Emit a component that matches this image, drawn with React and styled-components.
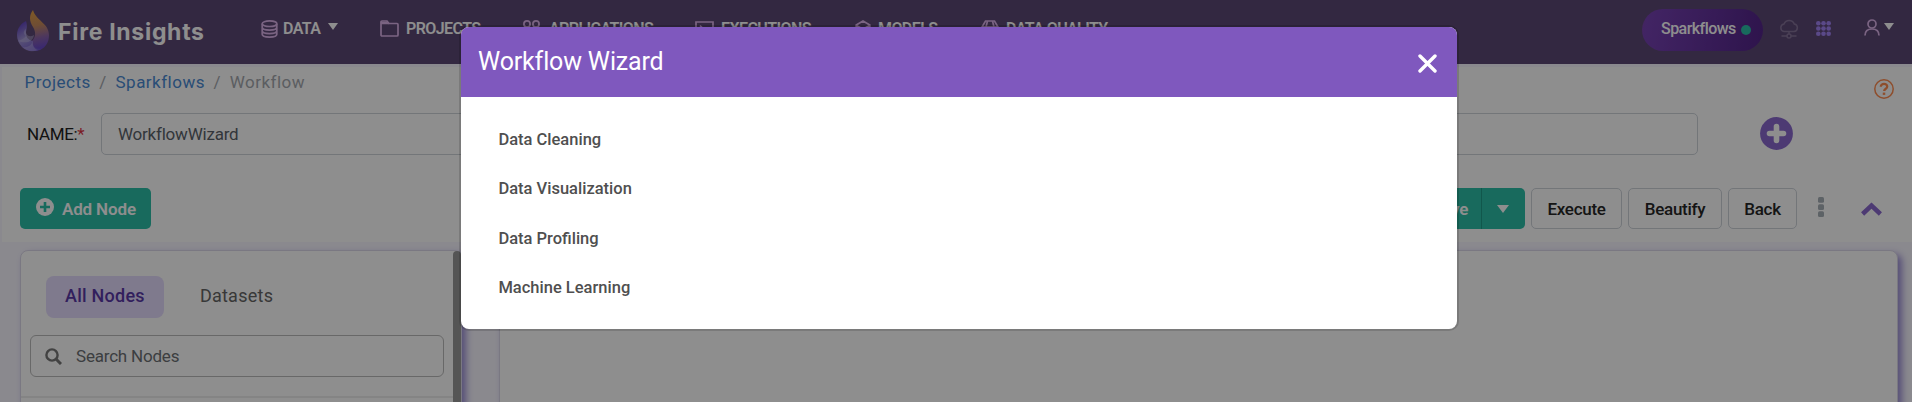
import React from "react";
import styled, { createGlobalStyle } from "styled-components";

const Global = createGlobalStyle`
  * { box-sizing: border-box; }
  html, body { margin: 0; padding: 0; overflow: hidden; }
  body { font-family: Roboto, "Liberation Sans", sans-serif; background: #f8f6ff; }
  button, input { font: inherit; }
`;

const Page = styled.div`
  position: relative;
  height: 402px;
  overflow: hidden;
  display: flex;
  flex-direction: column;
`;

const Header = styled.header`
  display: flex;
  height: 64px;
  flex: none;
  background: #5d4876;
  color: #fff;
`;

const Brand = styled.div`
  display: flex;
  width: 261px;
  padding: 9px 0 0 16px;
  gap: 8px;
`;

const BrandName = styled.span`
  font-family: Inter, sans-serif;
  font-weight: 700;
  font-size: 23px;
  line-height: 46px;
  letter-spacing: 0.7px;
  white-space: nowrap;
`;

const Nav = styled.nav`
  display: grid;
  grid-template-columns: 119px 143px 172px 160px 126px 140px;
  flex: 1;
`;

const NavItem = styled.a`
  display: flex;
  height: 57px;
  align-items: center;
  white-space: nowrap;
  font-size: 16px;
  font-weight: 600;
  letter-spacing: -0.58px;
  svg { flex: none; }
`;

const NavIcon = styled.span`
  display: flex;
  flex: none;
  width: ${(p) => p.$w}px;
  color: #dcb4ea;
`;

const Caret = styled.i`
  width: 0;
  height: 0;
  border: ${(p) => p.$s || 5}px solid transparent;
  border-top: ${(p) => p.$h || 7}px solid #fff;
  border-bottom: 0;
  margin: ${(p) => p.$m || "0"};
`;

const Tools = styled.div`
  display: flex;
  width: 270px;
  padding-top: 9px;
`;

const Pill = styled.div`
  display: flex;
  width: 121px;
  height: 42px;
  border-radius: 21px;
  padding: 0 0 4px 19px;
  align-items: center;
  gap: 5px;
  font-size: 16px;
  font-weight: 500;
  letter-spacing: -0.55px;
  background: linear-gradient(100deg, #79439f 0%, #7742b4 5%, #532489 100%);
`;

const Dot = styled.i`
  width: 10px;
  height: 10px;
  margin-top: 3px;
  border-radius: 50%;
  background: #2bbea7;
`;

const ToolIcon = styled.span`
  display: flex;
  height: 20px;
  margin: ${(p) => p.$m};
  color: ${(p) => p.$c};
`;

const Panel = styled.section`
  height: 178px;
  flex: none;
  margin-left: 2px;
  background: #fff;
  border-top: 3px solid #f8f6ff;
`;

const CrumbRow = styled.div`
  display: flex;
  justify-content: space-between;
  height: 46px;
  padding: 0 18px 0 22.5px;
`;

const Crumbs = styled.div`
  display: flex;
  gap: 8.7px;
  font-size: 17px;
  line-height: 31px;
  letter-spacing: 0.48px;
  color: #a4a8ae;
`;

const CrumbLink = styled.a`
  color: #4a8ad4;
`;

const HelpIcon = styled.span`
  padding-top: 12px;
  height: 32px;
`;

const NameRow = styled.div`
  display: flex;
  height: 42px;
  padding-left: 25px;
  align-items: center;
`;

const NameLabel = styled.label`
  width: 74px;
  font-size: 17px;
  color: #222;
  font-weight: 450;
  letter-spacing: -0.35px;
  span { color: #dc3545; }
`;

const NameField = styled.div`
  width: 1597px;
  height: 42px;
  border: 1px solid #ced4da;
  border-radius: 5px;
  padding-left: 16px;
  font-size: 17px;
  line-height: 40px;
  letter-spacing: -0.22px;
  color: #5a626a;
`;

const AddRound = styled.span`
  display: flex;
  margin: -1px 0 0 62px;
`;

const ActionRow = styled.div`
  display: flex;
  align-items: center;
  height: 41px;
  margin-top: 33px;
  padding-left: 18px;
`;

const TealButton = styled.button`
  display: flex;
  align-items: center;
  height: 41px;
  border: 0;
  padding: 0 0 0 ${(p) => p.$pad}px;
  width: ${(p) => p.$w}px;
  border-radius: ${(p) => p.$r || "5px"};
  background: #2bbea7;
  color: #fff;
  font-weight: 600;
  font-size: 17px;
  letter-spacing: -0.15px;
  gap: 8px;
  white-space: nowrap;
`;

const PlusBadge = styled.svg`
  margin-bottom: 3px;
`;

const Spacer = styled.div`
  width: 1264px;
  flex: none;
`;

const SaveCaret = styled(TealButton)`
  border-left: 1px solid #1f9d89;
`;

const PlainButton = styled.button`
  width: ${(p) => p.$w}px;
  height: 41px;
  margin-left: 6px;
  padding: 0;
  border: 1px solid #ced4da;
  border-radius: 5px;
  background: #fff;
  color: #262626;
  font-size: 17px;
  font-weight: 480;
  letter-spacing: -0.28px;
`;

const Workspace = styled.main`
  display: flex;
  flex: 1;
  padding: 8px 14px 0 20px;
  gap: 37px;
`;

const Card = styled.section`
  display: flex;
  height: 200px;
  width: ${(p) => p.$w}px;
  flex: none;
  border: 1px solid #dcd8ea;
  border-radius: 8px;
  background: #fff;
  box-shadow: 4px 4px 7px #9a8cd6;
`;

const NodePane = styled.div`
  flex: 1;
`;

const ScrollThumb = styled.div`
  width: 8px;
  border-radius: 5px 5px 0 0;
  background: #999;
`;

const Tabs = styled.div`
  display: flex;
  padding: 25px 0 0 25px;
`;

const Tab = styled.div`
  height: 42px;
  padding: 0 19px;
  margin-right: 17px;
  border-radius: 8px;
  font-size: 18px;
  line-height: 40px;
  letter-spacing: 0.25px;
  font-weight: ${(p) => (p.$active ? 500 : 400)};
  color: ${(p) => (p.$active ? "#5a39a8" : "#666")};
  background: ${(p) => (p.$active ? "#e4dbfd" : "transparent")};
`;

const Search = styled.div`
  display: flex;
  align-items: center;
  gap: 14px;
  width: 414px;
  height: 42px;
  margin: 17px 0 0 9px;
  padding-left: 14px;
  border: 1px solid #bbb;
  border-radius: 6px;
  font-size: 17px;
  letter-spacing: -0.2px;
  color: #6c7074;
`;

const Divider = styled.div`
  height: 2px;
  margin-top: 19px;
  background: #eee;
`;

const Backdrop = styled.div`
  position: absolute;
  inset: 0;
  display: flex;
  align-items: flex-start;
  padding: 27px 0 0 461px;
  background: rgba(0, 0, 0, 0.443);
`;

const Modal = styled.div`
  width: 996px;
  height: 302px;
  border-radius: 8px;
  background: #fff;
  box-shadow: 0 0 0 2px rgba(0, 0, 0, 0.14);
`;

const ModalHead = styled.div`
  display: flex;
  justify-content: space-between;
  height: 70px;
  padding: 0 20px 0 17px;
  border-radius: 8px 8px 0 0;
  background: #7f58be;
  color: #fff;
`;

const ModalTitle = styled.h2`
  margin: 0;
  font-size: 25px;
  font-weight: 400;
  line-height: 70px;
  letter-spacing: -0.15px;
`;

const CloseIcon = styled.svg`
  margin-top: 27px;
`;

const Choices = styled.ul`
  list-style: none;
  margin: 0;
  padding: 18px 0 0 37.4px;
  li {
    height: 49.33px;
    line-height: 49.33px;
    font-size: 16.5px;
    font-weight: 500;
    color: #4f4f4f;
  }
`;

const Flame = () => (
  <svg width="34" height="43" viewBox="0 0 34 43">
    <defs>
      <linearGradient id="flame" x1="0" y1="0" x2="0.15" y2="1">
        <stop offset="0" stopColor="#e9a53e" />
        <stop offset="0.45" stopColor="#c78b5e" />
        <stop offset="0.75" stopColor="#8b64a8" />
        <stop offset="1" stopColor="#6a4ac8" />
      </linearGradient>
      <linearGradient id="drop" x1="0.2" y1="0" x2="0.7" y2="1">
        <stop offset="0" stopColor="#5a3bbd" />
        <stop offset="0.5" stopColor="#a093d4" />
        <stop offset="1" stopColor="#7059cb" />
      </linearGradient>
    </defs>
    <path d="M17 1C13 6 13 12 17 18c3 5 3 10-1 14-4 5-9 7-11 5 5 5 13 6 19 4 6-3 9-8 9-15C33 14 20 12 17 1Z" fill="url(#flame)" />
    <path d="M10 12C4 15 1 20 1 26c0 9 7 16 16 16 3 0 6-1 8-2-6 0-9-3-8-8-5-1-7-4-7-8 0-3 2-6 0-12Z" fill="url(#drop)" />
    <path d="M10 20c-1 6 3 9 8 6-1 7-8 9-16 6 3-1 6-2 8-5-3-2-3-5 0-7Z" fill="#c3bce2" opacity="0.45" />
    <path d="M17 32c-2 5-6 7-11 6 5 5 11 5 16 3-4-1-6-5-5-9Z" fill="#b5a8e2" opacity="0.5" />
  </svg>
);

const line = { fill: "none", stroke: "currentColor", strokeWidth: 1.7 };

const DatabaseIcon = () => (
  <svg width="17" height="18" viewBox="0 0 17 18" {...line}>
    <ellipse cx="8.5" cy="3.7" rx="7.3" ry="2.8" />
    <path d="M1.2 3.7v10.6c0 1.6 3.2 2.8 7.3 2.8s7.3-1.2 7.3-2.8V3.7M1.2 7.3c0 1.6 3.2 2.8 7.3 2.8s7.3-1.2 7.3-2.8M1.2 10.8c0 1.6 3.2 2.8 7.3 2.8s7.3-1.2 7.3-2.8" />
  </svg>
);
const FolderIcon = () => (
  <svg width="19" height="17" viewBox="0 0 19 17" {...line}>
    <path d="M1 15V2q0-1 1-1h5l2 2.500h8q1 0 1 1V15q0 1-1 1H2q-1 0-1-1Z" />
    <path d="M1 2h6l2 2H1Z" fill="currentColor" strokeWidth="0.5" />
  </svg>
);
const AppsIcon = () => (
  <svg width="17" height="17" viewBox="0 0 17 17" {...line}>
    <circle cx="4" cy="4" r="3.100" />
    <circle cx="13" cy="4" r="3.100" />
    <circle cx="4" cy="13" r="3.100" />
    <circle cx="13" cy="13" r="3.100" />
  </svg>
);
const TerminalIcon = () => (
  <svg width="19" height="15" viewBox="0 0 19 15" {...line}>
    <path d="M1 1h17v13H1ZM5 4.500l3 3-3 3M10 10.500h4" />
  </svg>
);
const BoxIcon = () => (
  <svg width="16" height="17" viewBox="0 0 16 17" {...line}>
    <path d="M8 1l6.800 4v7.500L8 16l-6.800-3.500V5ZM1.200 5.500L8 9 14.800 5.500M8 9V16" />
  </svg>
);
const GlobeIcon = () => (
  <svg width="18" height="17" viewBox="0 0 18 17" {...line}>
    <path d="M4.500 1h9L17 7l-3.500 9h-9L1 7ZM6.500 1L5 7l2 9M11.500 1L13 7l-2 9M1 7h16" />
  </svg>
);
const CloudIcon = () => (
  <svg width="20" height="20" viewBox="0 0 20 20" fill="none" stroke="currentColor" strokeWidth="1.5">
    <path d="M5 12.500h10a3.800 3.800 0 0 0 .3-7.500A5.500 5.500 0 0 0 5 5a3.800 3.800 0 0 0 0 7.500ZM10 12.500V15M2.500 17H8M12 17h5.500" />
    <circle cx="10" cy="17" r="2" />
  </svg>
);
const GridIcon = () => (
  <svg width="15" height="15" viewBox="0 0 15 15" fill="currentColor">
    {[2.3, 7.5, 12.700].map((y) => [2.3, 7.5, 12.700].map((x) => <circle key={x + "-" + y} cx={x} cy={y} r="2.300" />))}
  </svg>
);
const UserIcon = () => (
  <svg width="16" height="17" viewBox="0 0 16 17" {...line}>
    <circle cx="8" cy="5" r="4" />
    <path d="M1 16.500c0-4.500 3-6.500 7-6.500s7 2 7 6.500" />
  </svg>
);

const navItems = [
  { label: "DATA", icon: <DatabaseIcon />, w: 22, caret: true },
  { label: "PROJECTS", icon: <FolderIcon />, w: 26 },
  { label: "APPLICATIONS", icon: <AppsIcon />, w: 26 },
  { label: "EXECUTIONS", icon: <TerminalIcon />, w: 26 },
  { label: "MODELS", icon: <BoxIcon />, w: 23 },
  { label: "DATA QUALITY", icon: <GlobeIcon />, w: 25 },
];

const choices = ["Data Cleaning", "Data Visualization", "Data Profiling", "Machine Learning"];

export default function App() {
  return (
    <Page>
      <Global />
      <Header>
        <Brand>
          <Flame />
          <BrandName>Fire Insights</BrandName>
        </Brand>
        <Nav>
          {navItems.map((n) => (
            <NavItem key={n.label}>
              <NavIcon $w={n.w}>{n.icon}</NavIcon>
              {n.label}
              {n.caret && <Caret $m="-4px 0 0 8px" />}
            </NavItem>
          ))}
        </Nav>
        <Tools>
          <Pill>
            Sparkflows
            <Dot />
          </Pill>
          <ToolIcon $m="10px 0 0 16px" $c="#857399"><CloudIcon /></ToolIcon>
          <ToolIcon $m="12px 0 0 17px" $c="#a283f5"><GridIcon /></ToolIcon>
          <ToolIcon $m="10px 0 0 33px" $c="#dcb4ea"><UserIcon /></ToolIcon>
          <Caret $m="14px 0 0 4px" />
        </Tools>
      </Header>

      <Panel>
        <CrumbRow>
          <Crumbs>
            <CrumbLink>Projects</CrumbLink>
            <span>/</span>
            <CrumbLink>Sparkflows</CrumbLink>
            <span>/</span>
            <span>Workflow</span>
          </Crumbs>
          <HelpIcon>
            <svg width="20" height="20" viewBox="0 0 20 20" fill="none" stroke="#ff8c50">
              <circle cx="10" cy="10" r="9.200" strokeWidth="1.500" />
              <path d="M6.800 7.800c0-4 6.600-3.700 6.400 0-.1 2-3 2-3 4.300" strokeWidth="2.300" />
              <path d="M10 13.600v2.300" strokeWidth="2.500" />
            </svg>
          </HelpIcon>
        </CrumbRow>
        <NameRow>
          <NameLabel>NAME:<span>*</span></NameLabel>
          <NameField>WorkflowWizard</NameField>
          <AddRound>
            <svg width="33" height="33" viewBox="0 0 33 33">
              <circle cx="16.500" cy="16.500" r="16.400" fill="#8a69ce" />
              <path d="M16.500 9.500v14M9.500 16.500h14" stroke="#fff" strokeWidth="5.600" strokeLinecap="round" />
            </svg>
          </AddRound>
        </NameRow>
        <ActionRow>
          <TealButton $w={131} $pad={16}>
            <PlusBadge width="18" height="18" viewBox="0 0 18 18">
              <circle cx="9" cy="9" r="9" fill="#fff" />
              <path d="M9 4v10M4 9h10" stroke="#2bbea7" strokeWidth="2.600" />
            </PlusBadge>
            Add Node
          </TealButton>
          <Spacer />
          <TealButton $w={66} $pad={17} $r="5px 0 0 5px">Save</TealButton>
          <SaveCaret $w={44} $pad={15} $r="0 5px 5px 0"><Caret $s={6} $h={8} /></SaveCaret>
          <PlainButton $w={91}>Execute</PlainButton>
          <PlainButton $w={94}>Beautify</PlainButton>
          <PlainButton $w={69}>Back</PlainButton>
          <ToolIcon $m="-4px 0 0 21px" $c="#a8b0b8">
            <svg width="6" height="20" viewBox="0 0 6 20" fill="currentColor">
              <rect width="6" height="5.700" rx="1.500" />
              <rect y="7.200" width="6" height="5.700" rx="1.500" />
              <rect y="14.300" width="6" height="5.700" rx="1.500" />
            </svg>
          </ToolIcon>
          <ToolIcon $m="7px 0 0 37px" $c="#8a69ce">
            <svg width="21" height="14" viewBox="0 0 21 14" {...line} strokeWidth="4.500">
              <path d="M1.600 12l8.900-8.500 8.900 8.500" />
            </svg>
          </ToolIcon>
        </ActionRow>
      </Panel>

      <Workspace>
        <Card $w={442}>
          <NodePane>
            <Tabs>
              <Tab $active>All Nodes</Tab>
              <Tab>Datasets</Tab>
            </Tabs>
            <Search>
              <svg width="17" height="17" viewBox="0 0 17 17" fill="none" stroke="#777" strokeWidth="2.400">
                <circle cx="7" cy="7" r="5.600" />
                <path d="M11 11l5 5" strokeWidth="3" />
              </svg>
              Search Nodes
            </Search>
            <Divider />
          </NodePane>
          <ScrollThumb />
        </Card>
        <Card $w={1399} />
      </Workspace>

      <Backdrop>
        <Modal>
          <ModalHead>
            <ModalTitle>Workflow Wizard</ModalTitle>
            <CloseIcon width="19" height="19" viewBox="0 0 19 19" fill="none" stroke="#fff" strokeWidth="3.400" strokeLinecap="round">
              <path d="M2 2l15 15M17 2L2 17" />
            </CloseIcon>
          </ModalHead>
          <Choices>
            {choices.map((c) => <li key={c}>{c}</li>)}
          </Choices>
        </Modal>
      </Backdrop>
    </Page>
  );
}
